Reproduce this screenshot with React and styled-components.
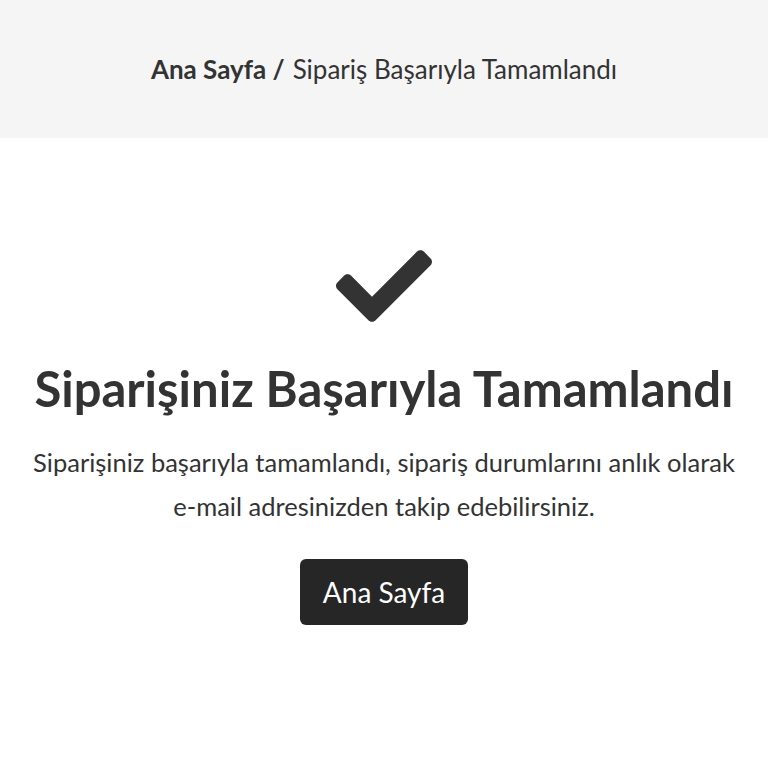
import React from "react";
import styled, { createGlobalStyle } from "styled-components";
import { FaCheck } from "react-icons/fa";

const Global = createGlobalStyle`
  html, body { margin: 0; padding: 0; background: #fff; }
  body { font-family: "Lato", "Noto Sans", sans-serif; color: #333; }
`;

const Banner = styled.header`
  height: 138px;
  background: #f5f5f5;
  display: flex;
  align-items: center;
  justify-content: center;
`;

const Crumbs = styled.nav`
  font-size: 26px;
  color: #333;
  display: flex;
  gap: 8px;
  align-items: baseline;
`;

const CrumbLink = styled.a`
  font-weight: 700;
  color: #333;
  text-decoration: none;
`;

const CrumbCurrent = styled.span`
  font-weight: 400;
`;

const Main = styled.main`
  display: flex;
  flex-direction: column;
  align-items: center;
  padding-top: 108px;
  text-align: center;
`;

const Icon = styled.div`
  color: #333;
  display: flex;
  height: 80px;
  align-items: center;
`;

const Title = styled.h1`
  margin: 35px 0 0;
  font-size: 49px;
  font-weight: 700;
  color: #333;
  line-height: 54px;
`;

const Text = styled.p`
  margin: 25px 0 0;
  font-size: 25.5px;
  line-height: 44px;
  color: #333;
`;

const Button = styled.a`
  margin-top: 31px;
  width: 168px;
  height: 66px;
  display: flex;
  align-items: center;
  justify-content: center;
  background: #262626;
  color: #fff;
  border-radius: 6px;
  font-size: 28px;
  text-decoration: none;
`;

export default function App() {
  return (
    <>
      <Global />
      <Banner>
        <Crumbs>
          <CrumbLink href="#">Ana Sayfa /</CrumbLink>
          <CrumbCurrent>Sipariş Başarıyla Tamamlandı</CrumbCurrent>
        </Crumbs>
      </Banner>
      <Main>
        <Icon>
          <FaCheck size={96} />
        </Icon>
        <Title>Siparişiniz Başarıyla Tamamlandı</Title>
        <Text>
          Siparişiniz başarıyla tamamlandı, sipariş durumlarını anlık olarak
          <br />
          e-mail adresinizden takip edebilirsiniz.
        </Text>
        <Button href="#">Ana Sayfa</Button>
      </Main>
    </>
  );
}
